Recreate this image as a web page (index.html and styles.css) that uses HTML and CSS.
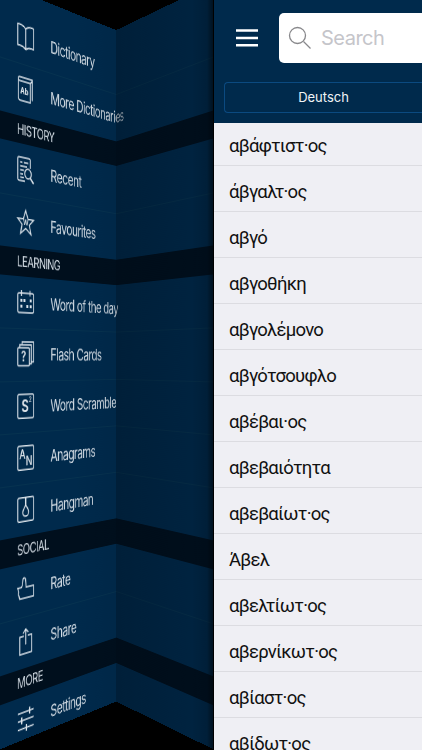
FILE: index.html
```
<!DOCTYPE html>
<html lang="en">
<head>
<meta charset="utf-8">
<title>Dictionary</title>
<link rel="stylesheet" href="styles.css">
</head>
<body>
<div class="app">
  <nav class="drawer">
    <div class="fold fold-left">
      <ul class="menu">
        <li class="item first"><svg viewBox="0 0 26 26"><path d="M13 4.5C10 1.5 5 1 1 1.500V23C5 22.500 10 23 13 25.500C16 23 21 22.500 25 23V1.500C21 1 16 1.500 13 4.500V25.500"/></svg><span>Dictionary</span></li>
        <li class="item long"><svg viewBox="0 0 26 26"><path d="M2 3V22Q2 25 5 25H20V5H4Q2 5 2 3Q2 1 4 1H23V22.500M20 5L23 2"/><text x="11" y="18.500" class="ab">Ab</text></svg><span>More Dictionaries</span></li>
        <li class="head">HISTORY</li>
        <li class="item"><svg viewBox="0 0 26 26"><path d="M12 25H3Q1 25 1 23V3Q1 1 3 1H18Q20 1 20 3V11M4.500 6H8M10 6H17M4.500 10H15M4.500 14H10M4.500 18H9M4.500 21.500H10"/><circle cx="16.500" cy="17" r="5"/><path d="M20 21L25 26" class="bold"/></svg><span>Recent</span></li>
        <li class="item"><svg viewBox="0 0 26 26"><path d="M13 1L16.500 9.500L25 10L18.500 15.500L21 25L13 19.500L5 25L7.500 15.500L1 10L9.500 9.500Z"/><text x="13" y="16.500" class="w">W</text></svg><span>Favourites</span></li>
        <li class="head">LEARNING</li>
        <li class="item long"><svg viewBox="0 0 26 26"><rect x="1" y="4" width="24" height="20" rx="2"/><path d="M6.500 1V7M19.500 1V7"/><path class="dots" d="M5 10h3v3h-3zM9.500 10h3v3h-3zM19 10h3v3h-3zM5 16h3v3h-3zM14 16h3v3h-3zM19 16h3v3h-3z"/></svg><span>Word of the day</span></li>
        <li class="item"><svg viewBox="0 0 26 26"><rect x="1" y="7" width="17.500" height="18.500" rx="1"/><path d="M4 7V4H21.500V23.500H18.500M7.500 4V1H25V21.500H21.500"/><text x="9.800" y="21" class="q">?</text></svg><span>Flash Cards</span></li>
        <li class="item"><svg viewBox="0 0 26 26"><rect x="1" y="0.800" width="24" height="24.400" rx="2"/><text x="12" y="19" class="s">S</text><text x="20" y="9" class="two">2</text></svg><span>Word Scramble</span></li>
        <li class="item"><svg viewBox="0 0 26 26"><rect x="1" y="0.800" width="24" height="24.400" rx="2"/><text x="8" y="14" class="an">A</text><text x="18" y="21.500" class="an">N</text></svg><span>Anagrams</span></li>
        <li class="item"><svg viewBox="0 0 26 26"><rect x="1" y="0.800" width="24" height="24.400" rx="2"/><path d="M13 1V8" class="bold"/><path d="M13 8C12 11 8.500 13 8.500 16A4.500 4 0 0 0 17.500 16C17.500 13 14 11 13 8Z"/></svg><span>Hangman</span></li>
        <li class="head">SOCIAL</li>
        <li class="item"><svg viewBox="0 0 26 26"><path d="M1 10.500H6.500C9 8 8 5 9 2Q11 0 12.500 2.500Q13.500 7 13.500 11H25V22H4Q3 19 2.500 18Q1 16 2.500 15Z"/></svg><span>Rate</span></li>
        <li class="item"><svg viewBox="0 0 26 26"><path d="M10 7H4V25H22V7H16M13 16V0M9 4L13 0L17 4"/></svg><span>Share</span></li>
        <li class="head">MORE</li>
        <li class="item"><svg viewBox="0 0 26 26"><path d="M1 4H25M1 12H25M1 20.500H25"/><path class="bold" d="M19 0.500V7.500M7 8.500V15.500M14 17V24"/></svg><span>Settings</span></li>
      </ul>
    </div>
    <div class="fold fold-right" aria-hidden="true"></div>
  </nav>
  <main class="page">
    <header class="bar">
      <div class="tools">
        <svg class="burger" viewBox="0 0 22 18"><path d="M0 1.500H22M0 9H22M0 16.200H22"/></svg>
        <div class="search">
          <svg viewBox="0 0 24 24"><circle cx="9.500" cy="9.500" r="8"/><path d="M15.500 15.500L22.500 22.500"/></svg>
          <span>Search</span>
        </div>
      </div>
      <div class="segment">Deutsch</div>
    </header>
    <ul class="words">
      <li>αβάφτιστ·ος</li>
      <li>άβγαλτ·ος</li>
      <li>αβγό</li>
      <li>αβγοθήκη</li>
      <li>αβγολέμονο</li>
      <li>αβγότσουφλο</li>
      <li>αβέβαι·ος</li>
      <li>αβεβαιότητα</li>
      <li>αβεβαίωτ·ος</li>
      <li>Άβελ</li>
      <li>αβελτίωτ·ος</li>
      <li>αβερνίκωτ·ος</li>
      <li>αβίαστ·ος</li>
      <li>αβίδωτ·ος</li>
    </ul>
  </main>
</div>
<script src="script.js"></script>
</body>
</html>
```
FILE: styles.css
```
* { box-sizing: border-box; }
body { margin: 0; background: #000; font-family: Inter, "Liberation Sans", sans-serif; }
ul { list-style: none; margin: 0; padding: 0; }

.app {
  width: 422px;
  height: 750px;
  display: grid;
  grid-template-columns: 214px 208px;
  overflow: hidden;
}

/* Folding drawer: two panels, each projected from a flat 190px half */
.drawer {
  display: grid;
  height: 750px;
  overflow: hidden;
  background: #000;
}
.fold {
  grid-area: 1 / 1;
  width: 190px;
  height: 766px;
  overflow: hidden;
  background: #002a4c;
  transform-origin: 0 0;
  display: grid;
}
.fold::after {
  content: "";
  grid-area: 1 / 1;
  z-index: 1;
}
.fold-left {
  transform: matrix3d(0.6963, 0.2672, 0, 0.000739, 0, 1, 0, 0, 0, 0, 1, 0, 0, -16.6, 0, 1);
}
.fold-left::after { background: linear-gradient(90deg, rgba(0,10,20,0) 30%, rgba(0,10,20,.26)); }
.fold-right {
  transform: matrix3d(0.4247, -0.2672, 0, -0.000739, 0, 1, 0, 0, 0, 0, 1, 0, 132.8, 34.2, 0, 1.1405);
}
.fold-right::after { background: linear-gradient(90deg, rgba(0,10,20,.34), rgba(0,10,20,.22) 80%, rgba(0,10,20,.34) 94%, rgba(0,5,10,.7)); }

.menu { grid-area: 1 / 1; width: 380px; color: #d3dce4; }
.fold-right .menu { margin-left: -190px; }
.item {
  height: 53.3px;
  display: flex;
  align-items: center;
  padding-left: 25px;
  gap: 25.5px;
  font-size: 17px;
  font-weight: 400;
  letter-spacing: -0.72px;
  white-space: nowrap;
}
.item + .item { border-top: 1px solid #06324f; }
.item.first { height: 73.3px; padding-top: 18px; }
.item svg {
  width: 26px;
  height: 26px;
  margin-top: -2px;
  fill: none;
  stroke: #dbe3ea;
  stroke-width: 1.5;
  overflow: visible;
}
.item .bold { stroke-width: 2.1; }
.item .dots { fill: #dbe3ea; stroke: none; }
.item text {
  fill: #e3e9ee;
  stroke: none;
  text-anchor: middle;
  letter-spacing: 0;
}
.ab { font-size: 9px; font-weight: 700; }
.w { font-size: 8px; font-weight: 600; }
.q { font-size: 14px; font-weight: 600; }
.s { font-size: 17px; font-weight: 600; }
.two { font-size: 7px; }
.an { font-size: 13.5px; font-weight: 500; }
.head {
  height: 28.9px;
  line-height: 28.9px;
  padding-left: 25px;
  background: #000f1d;
  font-size: 14.5px;
  font-weight: 400;
  letter-spacing: -0.7px;
}

/* Front page */
.page {
  height: 750px;
  overflow: hidden;
  background: #efeff4;
  display: flex;
  flex-direction: column;
}
.bar {
  flex: none;
  height: 123px;
  background: #002a4c;
  padding-top: 12.5px;
  z-index: 1;
}
.tools { display: flex; align-items: center; padding-left: 22px; gap: 21px; }
.burger { width: 22px; height: 18px; stroke: #fff; stroke-width: 2.4; fill: none; }
.search {
  flex: 1;
  height: 50px;
  background: #fff;
  border-radius: 5px 0 0 5px;
  display: flex;
  align-items: center;
  padding-left: 9px;
  gap: 9px;
  font-size: 20px;
  letter-spacing: -0.5px;
  color: #c5c5ca;
}
.search svg { width: 24px; height: 24px; fill: none; stroke: #88888b; stroke-width: 1.3; }
.segment {
  margin: 19.5px 0 0 10px;
  height: 31px;
  border: 1.5px solid #0b4a80;
  border-right: 0;
  border-radius: 4px 0 0 4px;
  text-align: center;
  line-height: 29px;
  font-size: 13px;
  color: #f0f4f7;
}
.words { margin-top: -3px; font-family: Roboto, sans-serif; font-size: 18.5px; letter-spacing: -0.75px; color: #111; }
.words li {
  height: 46px;
  padding: 4px 0 0 15px;
  line-height: 44px;
  border-bottom: 1px solid #dcdce1;
  white-space: nowrap;
}
```
FILE: script.js
```
// The right half of the folded drawer shows the far side of the same menu.
// Only the labels that are long enough to cross the fold are kept there.
const far = document.querySelector('.fold-left .menu').cloneNode(true);
far.querySelectorAll('.head').forEach((head) => { head.textContent = ''; });
far.querySelectorAll('.item:not(.long)').forEach((item) => item.replaceChildren());
document.querySelector('.fold-right').appendChild(far);
```
